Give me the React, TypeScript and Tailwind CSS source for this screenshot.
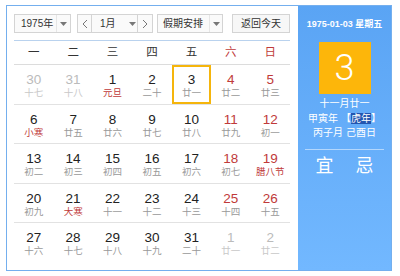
import React from "react";

type Day = {
  num: number;
  lunar: string;
  other?: boolean;
  fest?: boolean;
  selected?: boolean;
};

const rows: Day[][] = [
  [
    { num: 30, lunar: "十七", other: true },
    { num: 31, lunar: "十八", other: true },
    { num: 1, lunar: "元旦", fest: true },
    { num: 2, lunar: "二十" },
    { num: 3, lunar: "廿一", selected: true },
    { num: 4, lunar: "廿二" },
    { num: 5, lunar: "廿三" },
  ],
  [
    { num: 6, lunar: "小寒", fest: true },
    { num: 7, lunar: "廿五" },
    { num: 8, lunar: "廿六" },
    { num: 9, lunar: "廿七" },
    { num: 10, lunar: "廿八" },
    { num: 11, lunar: "廿九" },
    { num: 12, lunar: "初一" },
  ],
  [
    { num: 13, lunar: "初二" },
    { num: 14, lunar: "初三" },
    { num: 15, lunar: "初四" },
    { num: 16, lunar: "初五" },
    { num: 17, lunar: "初六" },
    { num: 18, lunar: "初七" },
    { num: 19, lunar: "腊八节", fest: true },
  ],
  [
    { num: 20, lunar: "初九" },
    { num: 21, lunar: "大寒", fest: true },
    { num: 22, lunar: "十一" },
    { num: 23, lunar: "十二" },
    { num: 24, lunar: "十三" },
    { num: 25, lunar: "十四" },
    { num: 26, lunar: "十五" },
  ],
  [
    { num: 27, lunar: "十六" },
    { num: 28, lunar: "十七" },
    { num: 29, lunar: "十八" },
    { num: 30, lunar: "十九" },
    { num: 31, lunar: "二十" },
    { num: 1, lunar: "廿一", other: true },
    { num: 2, lunar: "廿二", other: true },
  ],
];

const weekdays = ["一", "二", "三", "四", "五", "六", "日"];

const Caret = () => (
  <svg width="7" height="4" viewBox="0 0 7 4">
    <path d="M0 0h7L3.5 4z" fill="#777" />
  </svg>
);

const Chevron = ({ dir }: { dir: "left" | "right" }) => (
  <svg width="6" height="10" viewBox="0 0 6 10">
    <path
      d={dir === "left" ? "M5 1L1 5l4 4" : "M1 1l4 4-4 4"}
      fill="none"
      stroke="#777"
      strokeWidth="1"
    />
  </svg>
);

function DayCell({ day, col }: { day: Day; col: number }) {
  const weekend = col >= 5;
  let numColor = "text-[#222]";
  if (day.other) numColor = "text-[#bbb]";
  else if (weekend) numColor = "text-[#c03a3a]";

  let lunarColor = "text-[#999]";
  if (day.other) lunarColor = "text-[#c8c8c8]";
  else if (day.fest) lunarColor = "text-[#c03a3a]";

  return (
    <div
      className={`flex flex-col items-center pt-[7px] ${
        day.selected ? "ring-2 ring-inset ring-[#f5b50c]" : ""
      }`}
    >
      <span className={`text-[13.5px] leading-[15px] ${numColor}`}>{day.num}</span>
      <span className={`text-[9.5px] leading-[12px] ${lunarColor}`}>{day.lunar}</span>
    </div>
  );
}

export default function App() {
  return (
    <div
      className="pt-[5px] pl-[6px] bg-white"
      style={{ fontFamily: '"Liberation Sans", "Noto Sans CJK SC", sans-serif' }}
    >
      <div className="flex w-[386px] h-[266px] border border-[#74afee] bg-white">
        {/* Left calendar */}
        <div className="w-[291px] pl-[7px] pt-[8px]">
          {/* Controls */}
          <div className="flex items-center h-[19px] text-[10px] text-[#333]">
            <div className="flex items-center h-full w-[57px] border border-[#d4d4d4] bg-[#fafafa]">
              <span className="flex-1 pl-[6px]">1975年</span>
              <span className="flex items-center justify-center w-[14px] h-full border-l border-[#e6e6e6]">
                <Caret />
              </span>
            </div>
            <div className="flex items-center h-full w-[76px] ml-[6px] border border-[#d4d4d4] bg-[#fafafa]">
              <span className="flex items-center justify-center w-[14px] h-full border-r border-[#d4d4d4]">
                <Chevron dir="left" />
              </span>
              <span className="flex-1 pl-[8px]">1月</span>
              <span className="flex items-center justify-center w-[10px] h-full">
                <Caret />
              </span>
              <span className="flex items-center justify-center w-[15px] h-full border-l border-[#d4d4d4]">
                <Chevron dir="right" />
              </span>
            </div>
            <div className="flex items-center h-full w-[66px] ml-[4px] border border-[#d4d4d4] bg-[#fafafa]">
              <span className="flex-1 pl-[5px]">假期安排</span>
              <span className="flex items-center justify-center w-[13px] h-full border-l border-[#e6e6e6]">
                <Caret />
              </span>
            </div>
            <div className="flex items-center justify-center h-full w-[58px] ml-[9px] border border-[#d4d4d4] bg-[#f7f7f7]">
              返回今天
            </div>
          </div>

          {/* Weekday header */}
          <div className="w-[276px] mt-[7px] border-t border-[#b9d2ee]">
            <div className="grid grid-cols-7 h-[24px] items-center border-b border-[#dcdcdc] text-[11.5px]">
              {weekdays.map((w, i) => (
                <span
                  key={w}
                  className={`text-center ${i >= 5 ? "text-[#c03a3a]" : "text-[#333]"}`}
                >
                  {w}
                </span>
              ))}
            </div>

            {rows.map((row, r) => (
              <div
                key={r}
                className={`grid grid-cols-7 h-[39.5px] ${
                  r < rows.length - 1 ? "border-b border-[#e2e2e2]" : ""
                }`}
              >
                {row.map((d, c) => (
                  <DayCell key={c} day={d} col={c} />
                ))}
              </div>
            ))}
          </div>
        </div>

        {/* Right detail panel */}
        <div className="flex-1 flex flex-col items-center pt-[12px] bg-linear-to-b from-[#5aa4f4] to-[#72b8ff] text-white">
          <div className="text-[9px] leading-[12px] font-bold">1975-01-03 星期五</div>
          <div
            className="flex items-center justify-center w-[52px] h-[52px] mt-[12px] bg-[#fdb60a] text-[36px] font-light"
            style={{ fontFamily: "Roboto, sans-serif" }}
          >
            3
          </div>
          <div className="mt-[3px] flex flex-col items-center text-[10px] leading-[14.5px]">
            <span>十一月廿一</span>
            <span>
              甲寅年 【<span className="bg-[#2256b0]">虎年</span>】
            </span>
            <span>丙子月 己酉日</span>
          </div>
          <div className="w-[79px] mt-[8px] border-t border-white/50" />
          <div className="flex gap-[22px] pt-[4px] text-[18px] leading-[24px]">
            <span>宜</span>
            <span>忌</span>
          </div>
        </div>
      </div>
    </div>
  );
}
